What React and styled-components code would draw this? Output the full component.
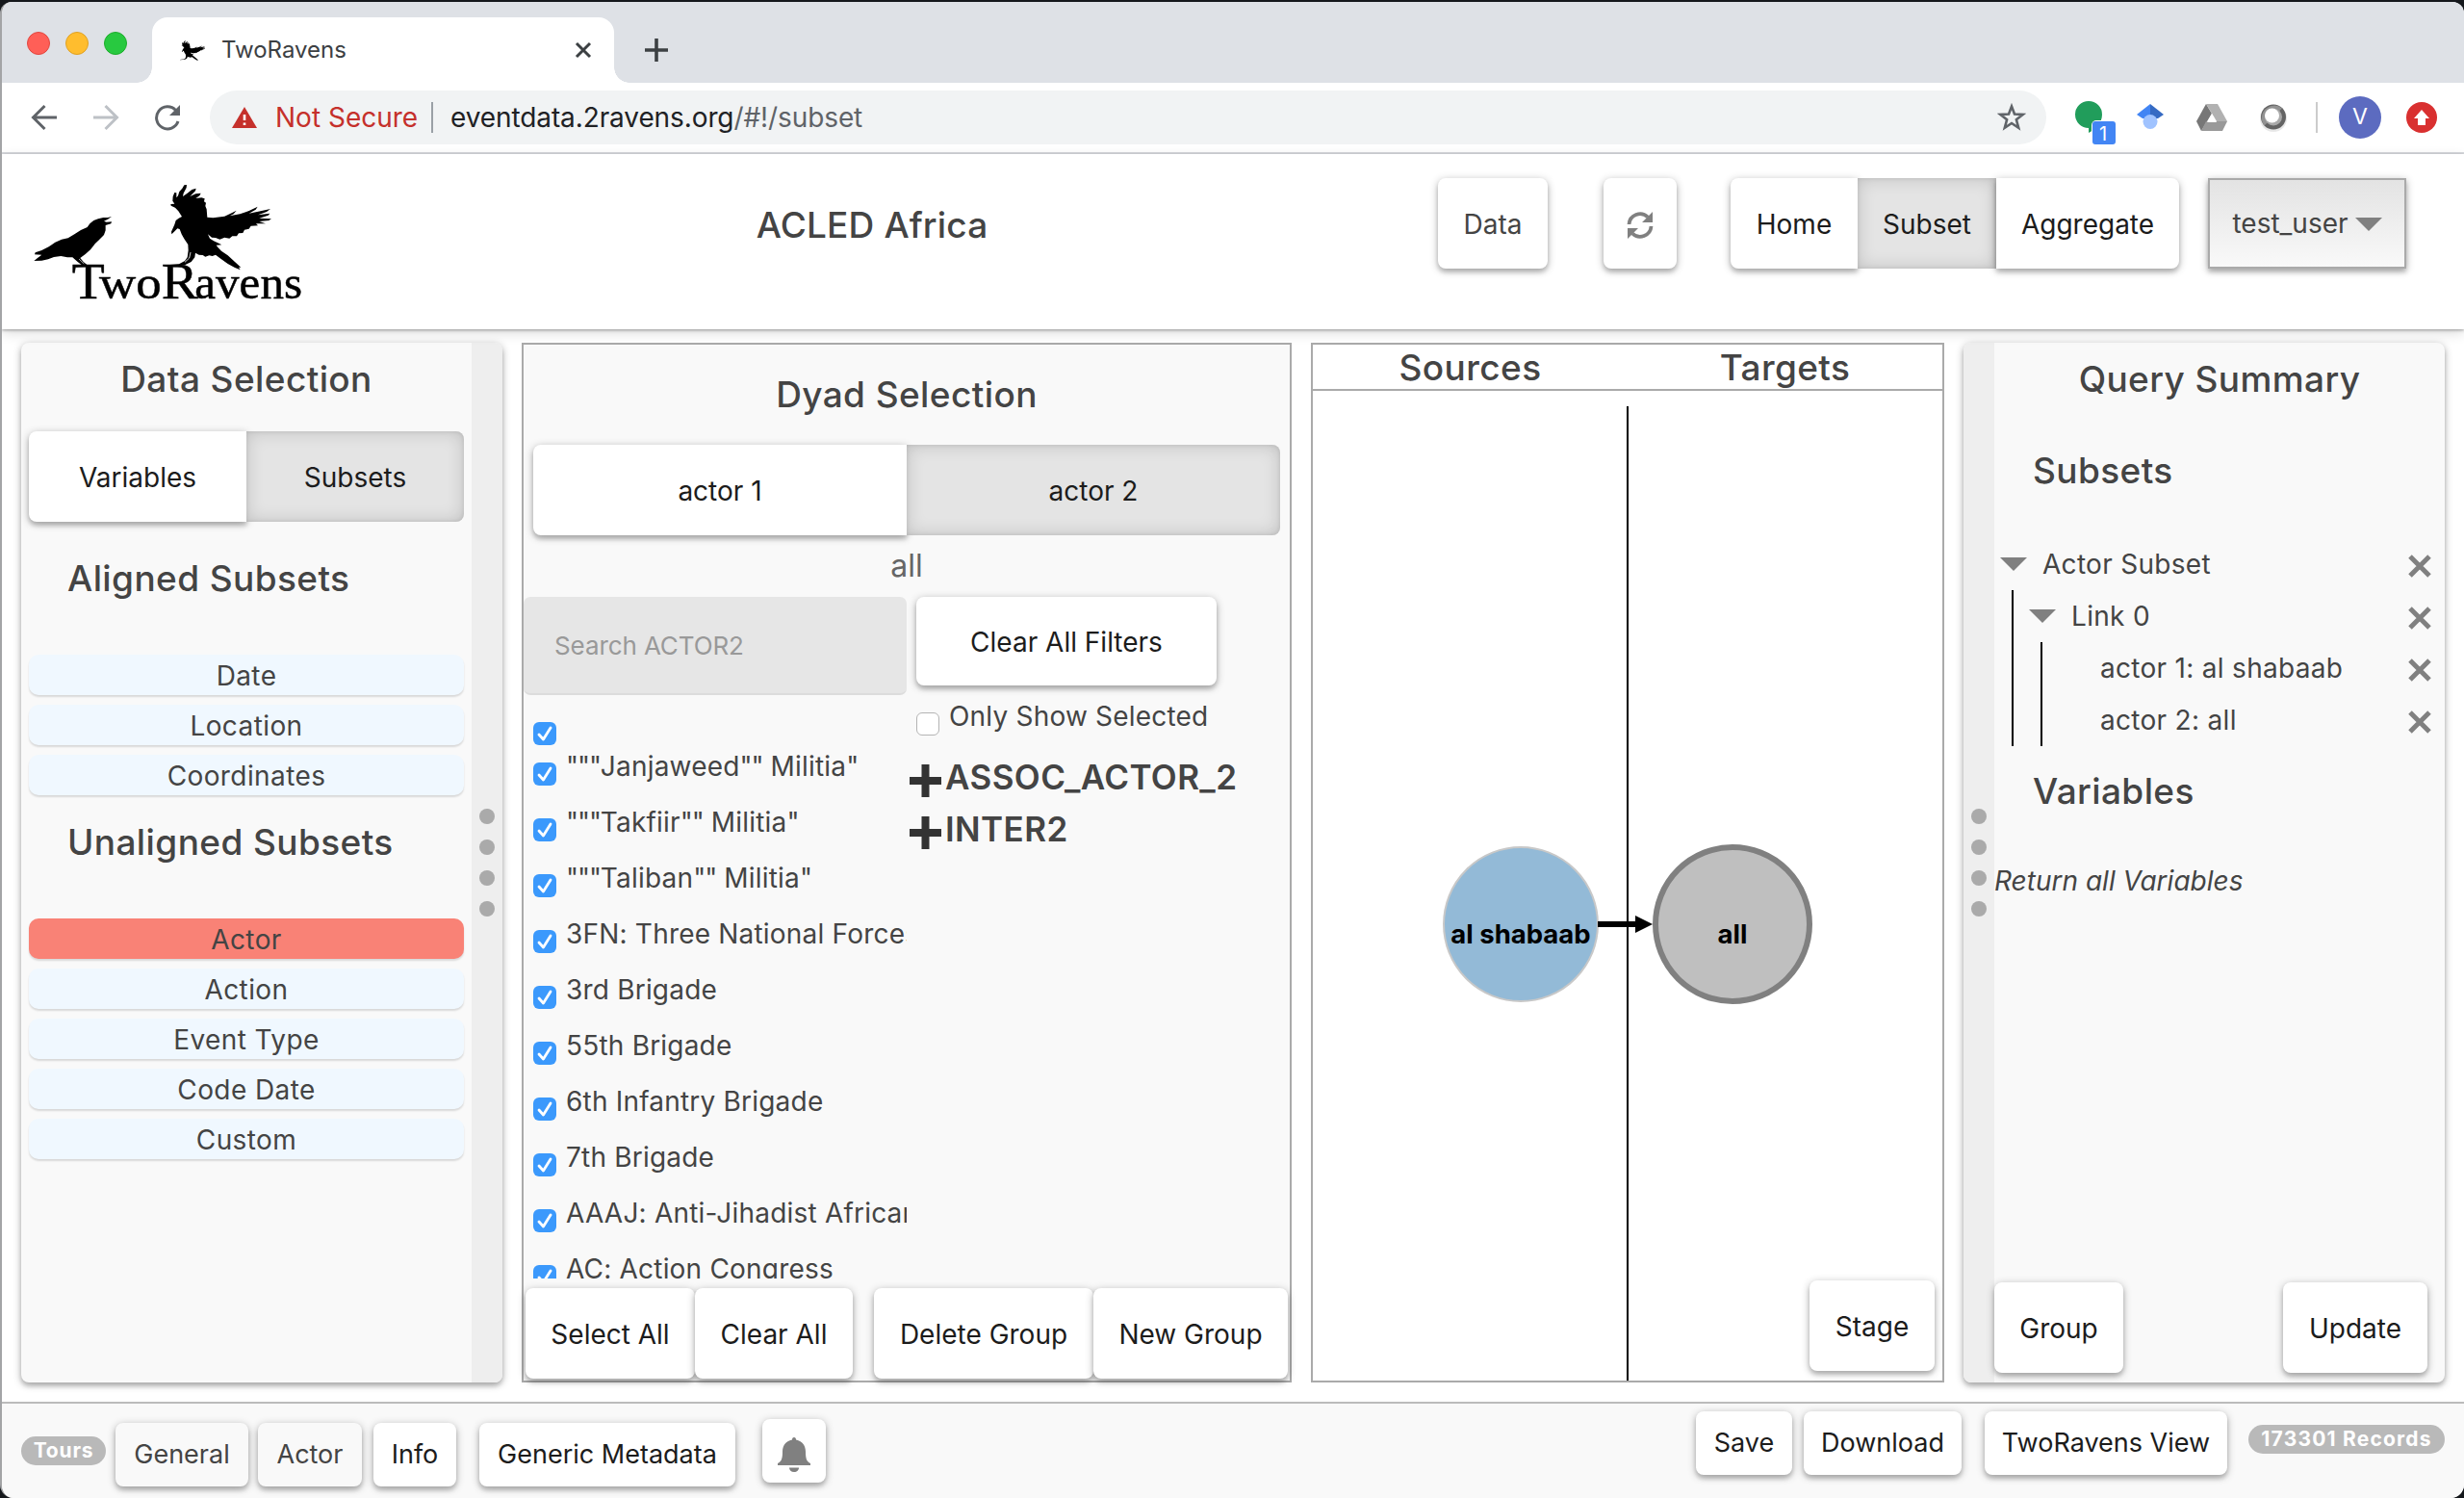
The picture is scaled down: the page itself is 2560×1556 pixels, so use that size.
import React from "react";
import styled, { createGlobalStyle, css } from "styled-components";

const Global = createGlobalStyle`
  * { box-sizing: border-box; }
  body { margin: 0; background: #15181c; overflow: hidden; }
  svg { display: block; flex: none; }
  h1, h2, h3, p { margin: 0; font-weight: 500; }
  button, input { font: inherit; letter-spacing: inherit; border: 0; padding: 0; margin: 0; }
`;

const raised = css`
  box-shadow: 0 4px 4px rgba(0, 0, 0, 0.14), 0 2px 8px rgba(0, 0, 0, 0.3);
`;

const Window = styled.div`
  width: 2560px;
  height: 1554px;
  margin-top: 2px;
  display: flex;
  flex-direction: column;
  border-left: 2px solid #a3a4a6;
  border-radius: 12px 12px 14px 14px;
  overflow: hidden;
  background: #fff;
  color: #444;
  font: 400 28px/1.21 Inter, "Liberation Sans", sans-serif;
`;

/* ---------- browser chrome ---------- */
const TabStrip = styled.div`
  height: 84px;
  flex: none;
  display: flex;
  align-items: center;
  padding-left: 26px;
  background: #dee1e6;
`;
const Lights = styled.div`
  display: flex;
  gap: 16px;
  margin-top: 2px;
`;
const Light = styled.span`
  width: 24px;
  height: 24px;
  border-radius: 50%;
  background: ${(p) => p.$color};
  border: 1px solid ${(p) => p.$edge};
`;
const Tab = styled.div`
  position: relative;
  align-self: flex-end;
  width: 480px;
  height: 68px;
  margin-left: 26px;
  padding: 0 23px 0 29px;
  display: flex;
  align-items: center;
  gap: 16px;
  background: #fff;
  border-radius: 16px 16px 0 0;
  color: #3c4043;
  font-size: 24px;
  &::before, &::after {
    content: "";
    position: absolute;
    bottom: 0;
    width: 16px;
    height: 16px;
  }
  &::before { left: -16px; background: radial-gradient(circle at 0 0, transparent 15.5px, #fff 16px); }
  &::after { right: -16px; background: radial-gradient(circle at 100% 0, transparent 15.5px, #fff 16px); }
`;
const TabTitle = styled.span`flex: 1;`;
const NewTab = styled.div`margin: 16px 0 0 32px;`;

const Toolbar = styled.div`
  height: 74px;
  flex: none;
  display: flex;
  align-items: center;
  padding-left: 30px;
  background: #fff;
  border-bottom: 2px solid #dadce0;
`;
const NavButtons = styled.div`
  display: flex;
  gap: 36px;
  margin-right: 30px;
`;
const Address = styled.div`
  width: 1908px;
  height: 56px;
  border-radius: 28px;
  background: #f1f3f4;
  padding: 0 21px 0 23px;
  display: flex;
  align-items: center;
`;
const Warning = styled.span`
  width: 163px;
  padding: 1px 0 0 19px;
  color: #c5302b;
  white-space: nowrap;
`;
const Divider = styled.span`
  width: 2px;
  height: 32px;
  margin: ${(p) => p.$m || 0};
  background: ${(p) => p.$color};
`;
const Url = styled.span`
  flex: 1;
  padding-top: 1px;
  color: #5f6368;
  letter-spacing: -0.1px;
  b { font-weight: 400; color: #202124; }
`;
const Extensions = styled.div`
  display: flex;
  gap: 16px;
  margin-left: 20px;
  svg { overflow: visible; }
`;
const Avatar = styled.div`
  width: 44px;
  height: 44px;
  margin-right: 26px;
  border-radius: 50%;
  background: #5c6bc0;
  color: #fff;
  font-size: 23px;
  display: flex;
  align-items: center;
  justify-content: center;
`;

/* ---------- shared parts ---------- */
const Button = styled.button`
  width: ${(p) => p.$w}px;
  height: ${(p) => p.$h || 94}px;
  flex: none;
  display: flex;
  align-items: center;
  justify-content: center;
  padding-top: 3px;
  border-radius: 8px;
  background: ${(p) => (p.$muted ? "#f9f9f9" : "#fff")};
  color: ${(p) => (p.$muted || p.$soft ? "#444" : "#1c1c1c")};
  white-space: nowrap;
  ${raised}
`;
const Group = styled.div`
  display: flex;
  margin: ${(p) => p.$m || 0};
  ${Button} { border-radius: 0; }
  ${Button}:first-child { border-radius: 8px 0 0 8px; }
  ${Button}:last-child { border-radius: 0 8px 8px 0; }
`;
const Pressed = styled(Button)`
  background: #e4e4e4;
  box-shadow: inset 0 0 18px rgba(0, 0, 0, 0.17), inset 0 0 4px rgba(0, 0, 0, 0.1);
`;
const Title = styled.h2`
  font-size: 37px;
  line-height: ${(p) => p.$lh}px;
  text-align: center;
  letter-spacing: 0.4px;
`;
const Heading = styled.h3`
  font-size: 37px;
  line-height: ${(p) => p.$lh}px;
  margin-bottom: ${(p) => p.$mb || 0}px;
  padding-left: 40px;
  letter-spacing: 0.4px;
`;
const Badge = styled.span`
  width: ${(p) => p.$w}px;
  height: 30px;
  border-radius: 15px;
  background: #b9b9b9;
  color: #fff;
  font-size: 21px;
  font-weight: 700;
  letter-spacing: ${(p) => p.$ls}px;
  line-height: 29px;
  text-align: center;
  white-space: nowrap;
`;

/* ---------- page header ---------- */
const Header = styled.header`
  position: relative;
  z-index: 1;
  height: 182px;
  flex: none;
  display: flex;
  align-items: flex-start;
  padding: 25px 0 0 18px;
  background: #fff;
  box-shadow: 0 1px 3px rgba(0, 0, 0, 0.35), 0 4px 12px rgba(0, 0, 0, 0.14);
  svg.logo { margin-top: -5px; }
`;
const DatasetName = styled.h1`
  width: 1152px;
  margin-right: 12px;
  line-height: 97px;
  font-size: 37px;
  letter-spacing: 0.15px;
  text-align: center;
`;
const UserMenu = styled.button`
  width: 206px;
  height: 94px;
  display: flex;
  align-items: center;
  justify-content: center;
  gap: 7px;
  padding-top: 2px;
  color: #444;
  border: 2px solid #aaa;
  background: linear-gradient(#e3e3e3, #f9f9f9);
  ${raised}
`;
const Spacer = styled.span`width: ${(p) => p.$w}px; flex: none;`;

/* ---------- workspace ---------- */
const Workspace = styled.main`
  flex: 1;
  min-height: 0;
  display: flex;
  gap: 20px;
  padding: 14px 20px 20px;
`;
const SidePanel = styled.aside`
  width: 500px;
  flex: none;
  display: flex;
  flex-direction: ${(p) => (p.$flip ? "row-reverse" : "row")};
  border-radius: 8px;
  overflow: hidden;
  background: #f9f9f9;
  ${raised}
`;
const PanelBody = styled.div`
  width: 468px;
  padding: 0 ${(p) => p.$px}px;
  display: flex;
  flex-direction: column;
`;
const Handle = styled.div`
  width: 32px;
  display: flex;
  flex-direction: column;
  align-items: center;
  justify-content: center;
  gap: 16px;
  background: #eee;
  i { width: 16px; height: 16px; border-radius: 50%; background: #aaa; }
`;
const Pills = styled.div`
  display: flex;
  flex-direction: column;
  gap: 10px;
`;
const Pill = styled.div`
  height: 42px;
  border-radius: 10px;
  line-height: 45px;
  text-align: center;
  letter-spacing: 0.4px;
  background: ${(p) => (p.$active ? "#f98276" : "#f0f8ff")};
  box-shadow: 0 2px 2px rgba(0, 0, 0, 0.13);
`;

const DyadPanel = styled.section`
  width: 800px;
  flex: none;
  display: flex;
  flex-direction: column;
  border: 2px solid #aaa;
  background: #f9f9f9;
`;
const GroupName = styled.p`
  line-height: 64px;
  font-size: 32px;
  font-weight: 400;
  color: #666;
  text-align: center;
`;
const Columns = styled.div`
  height: 708px;
  display: flex;
`;
const ActorColumn = styled.div`
  width: 398px;
  overflow: hidden;
`;
const Search = styled.input`
  display: block;
  width: 398px;
  height: 102px;
  padding: 1px 0 0 32px;
  border-radius: 7px;
  border-bottom: 2px solid #dcdcdc;
  background: #e6e6e6;
  font-size: 26px;
  &::placeholder { color: #999; opacity: 1; letter-spacing: -0.1px; }
`;
const ActorList = styled.div`
  padding: 2px 0 0 10px;
`;
const CheckRow = styled.label`
  display: flex;
  align-items: flex-start;
  gap: 10px;
  height: ${(p) => p.$h}px;
  line-height: ${(p) => p.$h + 2}px;
  white-space: nowrap;
  letter-spacing: ${(p) => p.$ls || 0.2}px;
`;
const Box = styled.span`
  width: 24px;
  height: 24px;
  flex: none;
  margin-top: ${(p) => p.$mt}px;
  border-radius: 6px;
  background: ${(p) => (p.$on ? "#3b99fc" : "#fff")};
  border: ${(p) => (p.$on ? "0" : "1.5px solid #b4b4b4")};
`;
const Quotes = styled.span`
  letter-spacing: -1.1px;
`;
const FilterColumn = styled.div`
  padding-left: 10px;
`;
const Filters = styled.div`margin-top: 10px;`;
const Filter = styled.div`
  display: flex;
  align-items: center;
  gap: 4px;
  height: 54px;
  margin-left: -7px;
  font-size: 35px;
  font-weight: 600;
  letter-spacing: 0.4px;
  svg { margin-top: 8px; }
`;
const ListActions = styled.div`
  display: flex;
  margin: 10px 2px 0;
`;

const GraphPanel = styled.section`
  width: 658px;
  flex: none;
  display: flex;
  flex-direction: column;
  border: 2px solid #aaa;
`;
const GraphHeader = styled.div`
  height: 48px;
  display: grid;
  grid-template-columns: 1fr 1fr;
  border-bottom: 2px solid #aaa;
`;
const Graph = styled.div`
  position: relative;
  flex: 1;
  ${Button} { position: absolute; right: 8px; bottom: 10px; }
`;

const Node = styled.div`
  height: 54px;
  display: flex;
  align-items: center;
  padding: 0 14px 0 ${(p) => p.$pl}px;
  letter-spacing: 0.3px;
  white-space: nowrap;
  span { flex: 1; padding: 2px 0 0 ${(p) => (p.$leaf ? 0 : 16)}px; }
`;
const Children = styled.div`
  margin-left: ${(p) => p.$ml}px;
  border-left: 2px solid #000;
`;
const Note = styled.p`
  line-height: 93px;
  font-weight: 400;
  font-style: italic;
`;
const PanelActions = styled.div`
  display: flex;
  justify-content: space-between;
  margin: auto 18px 10px 0;
`;

const Footer = styled.footer`
  height: 100px;
  flex: none;
  display: flex;
  justify-content: space-between;
  padding: 0 20px;
  border-top: 2px solid #bbb;
  background: #f9f9f9;
`;
const FooterSide = styled.div`
  display: flex;
  align-items: flex-start;
  padding-top: ${(p) => p.$pt}px;
  ${Badge} { margin-top: 14px; }
`;
const FooterButton = styled(Button)`
  padding-top: ${(p) => p.$pt || 0}px;
  font-size: 27px;
  letter-spacing: ${(p) => p.$ls || 0}px;
`;
const BellButton = styled(Button)`margin-top: -4px; padding-top: 8px;`;

/* ---------- drawings ---------- */
const FLYING =
  "M475 190 L474 182 L484 160 L488 147 L497 140 L507 135 L496 118 L486 107 L473 101 L472 96 L484 95 L478 86 L479 72 L484 60 L490 61 L490 76 L495 70 L499 57 L508 47 L514 37 L522 36 L521 45 L512 62 L510 72 L524 62 L538 51 L551 47 L549 55 L532 72 L550 64 L566 62 L562 70 L550 78 L568 76 L578 79 L576 88 L582 92 L580 102 L584 112 L586 137 L604 139 L640 134 L662 124 L677 116 L668 127 L656 133 L688 127 L716 117 L743 104 L737 113 L716 125 L752 118 L783 111 L771 120 L744 130 L781 125 L776 131 L748 140 L786 142 L778 147 L748 150 L768 157 L738 157 L744 163 L722 164 L716 173 L702 176 L697 186 L684 187 L678 196 L664 196 L655 203 L640 200 L625 206 L612 201 L600 200 L588 190 L594 203 L606 211 L619 217 L631 223 L614 224 L620 232 L630 242 L650 256 L672 276 L691 293 L684 293 L689 301 L672 294 L650 282 L628 266 L612 254 L602 258 L592 256 L580 260 L572 255 L560 254 L549 248 L547 262 L536 276 L516 286 L490 290 L446 291 L470 285 L498 283 L516 273 L524 262 L527 240 L526 222 L514 204 L506 190 L500 174 L493 172 L485 180 Z";
const PERCHED =
  "M288 135 L276 138 L262 138 L246 142 L232 147 L220 157 L212 168 L192 177 L172 190 L152 202 L132 206 L112 215 L92 229 L70 240 L50 247 L48 253 L70 254 L56 265 L46 273 L70 272 L90 268 L108 261 L130 258 L150 262 L166 262 L182 276 L194 285 L212 286 L200 276 L190 264 L206 252 L222 238 L236 220 L250 206 L264 192 L269 178 L269 162 L286 157 L288 151 L272 152 L264 149 L276 143 Z";

const Logo = () => (
  <svg className="logo" width="310" height="150" viewBox="0 0 930 450">
    <path d={PERCHED} />
    <path d={FLYING} />
    <path d="M534 246 L530 264 L516 277" stroke="#fff" strokeWidth="2.500" fill="none" />
    <path d="M186 267 L202 282" stroke="#fff" strokeWidth="2" fill="none" />
    <g fontFamily="'Liberation Serif', serif" stroke="#000" strokeWidth="1.500">
      <text x="164" y="391" fontSize="159" textLength="102" lengthAdjust="spacingAndGlyphs">T</text>
      <text x="249" y="391" fontSize="147" textLength="194" lengthAdjust="spacingAndGlyphs">wo</text>
      <text x="443" y="391" fontSize="159" textLength="114" lengthAdjust="spacingAndGlyphs">R</text>
      <text x="547" y="391" fontSize="147" textLength="335" lengthAdjust="spacingAndGlyphs">avens</text>
    </g>
  </svg>
);

const Caret = () => (
  <svg width="28" height="14" viewBox="0 0 28 14"><path d="M0 0H28L14 14Z" fill="#808080" /></svg>
);
const CrossIcon = styled.svg`margin-top: 4px;`;
const Cross = () => (
  <CrossIcon width="24" height="24" viewBox="0 0 24 24">
    <path d="M2 2L22 22M22 2L2 22" stroke="#808080" strokeWidth="5" />
  </CrossIcon>
);
const Tick = () => (
  <svg width="24" height="24" viewBox="0 0 24 24">
    <path d="M6 13L10.500 18L18 6" fill="none" stroke="#fff" strokeWidth="2.800" strokeLinecap="round" strokeLinejoin="round" />
  </svg>
);
const Plus = () => (
  <svg width="33" height="34" viewBox="0 0 33 34">
    <path d="M12.500 0h8v13h12.500v8H20.500v13h-8V21H0v-8h12.500z" fill="#333" />
  </svg>
);
const Dots = () => (<Handle><i /><i /><i /><i /></Handle>);

const actors = [
  "", '"""Janjaweed"" Militia"', '"""Takfiir"" Militia"', '"""Taliban"" Militia"',
  "3FN: Three National Forces", "3rd Brigade", "55th Brigade", "6th Infantry Brigade",
  "7th Brigade", "AAAJ: Anti-Jihadist African", "AC: Action Congress",
];

const ActorName = ({ children }) => (
  <span>
    {children.split(/("+)/).map((part, i) =>
      part.startsWith('"') ? <Quotes key={i}>{part}</Quotes> : part
    )}
  </span>
);

export default function App() {
  return (
    <>
      <Global />
      <Window>
        <TabStrip>
          <Lights>
            <Light $color="#ff5f57" $edge="#e2463f" />
            <Light $color="#ffbd2e" $edge="#dfa123" />
            <Light $color="#28c940" $edge="#1dad2b" />
          </Lights>
          <Tab>
            <svg width="27" height="27" viewBox="450 30 345 275"><path d={FLYING} /></svg>
            <TabTitle>TwoRavens</TabTitle>
            <svg width="18" height="18" viewBox="0 0 18 18"><path d="M2 2L16 16M16 2L2 16" stroke="#3c4043" strokeWidth="3" /></svg>
          </Tab>
          <NewTab>
            <svg width="24" height="24" viewBox="0 0 24 24"><path d="M12 0V24M0 12H24" stroke="#3c4043" strokeWidth="3.600" /></svg>
          </NewTab>
        </TabStrip>
        <Toolbar>
          <NavButtons>
            <svg width="28" height="28" viewBox="0 0 28 28"><path d="M27 14H3M14.500 2L2.500 14L14.500 26" fill="none" stroke="#5f6368" strokeWidth="3" /></svg>
            <svg width="28" height="28" viewBox="0 0 28 28"><path d="M1 14H25M13.500 2L25.500 14L13.500 26" fill="none" stroke="#bdc1c6" strokeWidth="3" /></svg>
            <svg width="28" height="28" viewBox="0 0 28 28">
              <path d="M25 18A11.500 11.500 0 1 1 22.500 6.500" fill="none" stroke="#5f6368" strokeWidth="3" />
              <path d="M27 1V12H16Z" fill="#5f6368" />
            </svg>
          </NavButtons>
          <Address>
            <svg width="26" height="22" viewBox="0 0 26 22">
              <path d="M13 0L26 22H0Z" fill="#c5302b" />
              <path d="M13 8V14M13 16.500V19" stroke="#fff" strokeWidth="2.600" />
            </svg>
            <Warning>Not Secure</Warning>
            <Spacer $w={18} />
            <Divider $color="#9aa0a6" $m="0 18px 0 0" />
            <Url><b>eventdata.2ravens.org</b>/#!/subset</Url>
            <svg width="30" height="30" viewBox="0 0 30 30">
              <path d="M15 3.500L18 11.500L26.700 11.900L19.900 17.300L22.200 25.800L15 21L7.800 25.800L10.100 17.300L3.300 11.900L12 11.500Z" fill="none" stroke="#5f6368" strokeWidth="2.600" />
            </svg>
          </Address>
          <Extensions>
            <svg width="48" height="60" viewBox="0 0 48 60">
              <path d="M24 13A14 14 0 1 0 24 41V46C31 42 38 36 38 27A14 14 0 0 0 24 13Z" fill="#219d5b" />
              <rect x="27" y="33" width="26" height="26" rx="5" fill="#fff" />
              <rect x="28" y="34" width="24" height="24" rx="3" fill="#4285f4" />
              <text x="39" y="54" fontSize="20" textAnchor="middle" fill="#fff">1</text>
            </svg>
            <svg width="48" height="60" viewBox="0 0 48 60">
              <path d="M24 16L10 27L16 31H24Z" fill="#4285f4" />
              <path d="M24 16L38 27L32 31H24Z" fill="#356ac3" />
              <circle cx="24" cy="34.500" r="7.500" fill="#a0c3ff" />
            </svg>
            <svg width="48" height="60" viewBox="0 0 48 60">
              <path d="M18 16L8 34L13 44L24 26Z" fill="#777" />
              <path d="M18 16H30L40 34H29Z" fill="#b1b1b1" />
              <path d="M18 34H40L35 44H13Z" fill="#999" />
              <path d="M24 26L29 35H19Z" fill="#fff" />
            </svg>
            <svg width="48" height="60" viewBox="0 0 48 60">
              <circle cx="24" cy="31" r="14" fill="#e8e8e8" />
              <circle cx="24" cy="29.500" r="13" fill="#646464" />
              <path d="M14.500 38.500A13 13 0 0 1 33 20.500Z" fill="#929292" />
              <circle cx="24" cy="29.500" r="9" fill="#aaa" />
              <circle cx="22.500" cy="28" r="7.500" fill="#fff" />
            </svg>
          </Extensions>
          <Divider $color="#ccc" $m="0 22px 0 20px" />
          <Avatar>V</Avatar>
          <svg width="32" height="32" viewBox="0 0 32 32">
            <circle cx="16" cy="16" r="16" fill="#d93030" />
            <path d="M16 8L24 17H20V24H12V17H8Z" fill="#fff" />
          </svg>
        </Toolbar>

        <Header>
          <Logo />
          <DatasetName>ACLED Africa</DatasetName>
          <Button $w={114} $soft>Data</Button>
          <Spacer $w={58} />
          <Button $w={76}>
            <svg width="30" height="30" viewBox="0 0 30 30">
              <path d="M3.500 14A11.500 11.500 0 0 1 23 6.500M26.500 16A11.500 11.500 0 0 1 7 23.500" fill="none" stroke="#808080" strokeWidth="3.800" />
              <path d="M28 1V12H17ZM2 29V18H13Z" fill="#808080" />
            </svg>
          </Button>
          <Group $m="0 30px 0 56px">
            <Button $w={132}>Home</Button>
            <Pressed $w={144}>Subset</Pressed>
            <Button $w={190}>Aggregate</Button>
          </Group>
          <UserMenu>test_user<Caret /></UserMenu>
        </Header>

        <Workspace>
          <SidePanel>
            <PanelBody $px={8}>
              <Title $lh={76} style={{ height: 92 }}>Data Selection</Title>
              <Group>
                <Button $w={226}>Variables</Button>
                <Pressed $w={226}>Subsets</Pressed>
              </Group>
              <Heading $lh={117} $mb={21}>Aligned Subsets</Heading>
              <Pills>
                {["Date", "Location", "Coordinates"].map((t) => <Pill key={t}>{t}</Pill>)}
              </Pills>
              <Heading $lh={97} $mb={31}>Unaligned Subsets</Heading>
              <Pills>
                {["Actor", "Action", "Event Type", "Code Date", "Custom"].map((t) => (
                  <Pill key={t} $active={t === "Actor"}>{t}</Pill>
                ))}
              </Pills>
            </PanelBody>
            <Dots />
          </SidePanel>

          <DyadPanel>
            <Title $lh={104}>Dyad Selection</Title>
            <Group $m="0 10px">
              <Button $w={388}>actor 1</Button>
              <Pressed $w={388}>actor 2</Pressed>
            </Group>
            <GroupName>all</GroupName>
            <Columns>
              <ActorColumn>
                <Search placeholder="Search ACTOR2" />
                <ActorList>
                  {actors.map((name, i) => (
                    <CheckRow key={i} $h={i === 0 ? 42 : 58}>
                      <Box $on $mt={26}><Tick /></Box>
                      <ActorName>{name}</ActorName>
                    </CheckRow>
                  ))}
                </ActorList>
              </ActorColumn>
              <FilterColumn>
                <Button $w={312} $h={92}>Clear All Filters</Button>
                <Spacer as="div" style={{ height: 4 }} />
                <CheckRow $h={54} $ls={0.2}>
                  <Box $mt={24} />
                  Only Show Selected
                </CheckRow>
                <Filters>
                  <Filter><Plus />ASSOC_ACTOR_2</Filter>
                  <Filter><Plus />INTER2</Filter>
                </Filters>
              </FilterColumn>
            </Columns>
            <ListActions>
              <Button $w={176}>Select All</Button>
              <Button $w={164}>Clear All</Button>
              <Spacer $w={22} />
              <Button $w={228}>Delete Group</Button>
              <Button $w={202}>New Group</Button>
            </ListActions>
          </DyadPanel>

          <GraphPanel>
            <GraphHeader>
              <Title $lh={48}>Sources</Title>
              <Title $lh={48}>Targets</Title>
            </GraphHeader>
            <Graph>
              <svg width="654" height="1028" viewBox="1364 406 654 1028">
                <path d="M1691 422V1434" stroke="#000" strokeWidth="2" />
                <circle cx="1580" cy="960" r="80" fill="#93bad7" stroke="#c8c8c8" strokeWidth="2" />
                <circle cx="1800" cy="960" r="80" fill="#bfbfbf" stroke="#808080" strokeWidth="6" />
                <path d="M1660 960H1702" stroke="#000" strokeWidth="6" />
                <path d="M1699 951L1717 960L1699 969Z" />
                <g fontSize="27.500" fontWeight="700" textAnchor="middle" fill="#000">
                  <text x="1580" y="979.500">al shabaab</text>
                  <text x="1800" y="979.500">all</text>
                </g>
              </svg>
              <Button $w={130}>Stage</Button>
            </Graph>
          </GraphPanel>

          <SidePanel $flip>
            <PanelBody $px={0}>
              <Title $lh={76}>Query Summary</Title>
              <Heading $lh={113} $mb={14}>Subsets</Heading>
              <Node $pl={6}><Caret /><span>Actor Subset</span><Cross /></Node>
              <Children $ml={18}>
                <Node $pl={16}><Caret /><span>Link 0</span><Cross /></Node>
                <Children $ml={28}>
                  <Node $pl={60} $leaf><span>actor 1: al shabaab</span><Cross /></Node>
                  <Node $pl={60} $leaf><span>actor 2: all</span><Cross /></Node>
                </Children>
              </Children>
              <Heading $lh={94}>Variables</Heading>
              <Note>Return all Variables</Note>
              <PanelActions>
                <Button $w={134}>Group</Button>
                <Button $w={150}>Update</Button>
              </PanelActions>
            </PanelBody>
            <Dots />
          </SidePanel>
        </Workspace>

        <Footer>
          <FooterSide $pt={20}>
            <Badge $w={88} $ls={0.8}>Tours</Badge>
            <Spacer $w={10} />
            <FooterButton $w={138} $h={66} $muted>General</FooterButton>
            <Spacer $w={10} />
            <FooterButton $w={108} $h={66} $muted>Actor</FooterButton>
            <Spacer $w={12} />
            <FooterButton $w={86} $h={66}>Info</FooterButton>
            <Spacer $w={24} />
            <FooterButton $w={266} $h={66}>Generic Metadata</FooterButton>
            <Spacer $w={28} />
            <BellButton $w={66} $h={66}>
              <svg width="34" height="36" viewBox="0 0 34 36">
                <path d="M17 0C18.500 0 19 1 19 2.500C26 4 29 9 29 15C29 22 30 25 34 27V29H0V27C4 25 5 22 5 15C5 9 8 4 15 2.500C15 1 15.500 0 17 0Z" fill="#808080" />
                <path d="M12 31.500H22C22 34 20 36 17 36S12 34 12 31.500Z" fill="#808080" />
              </svg>
            </BellButton>
          </FooterSide>
          <FooterSide $pt={8}>
            <FooterButton $w={100} $h={66}>Save</FooterButton>
            <Spacer $w={12} />
            <FooterButton $w={164} $h={66}>Download</FooterButton>
            <Spacer $w={24} />
            <FooterButton $w={252} $h={66}>TwoRavens View</FooterButton>
            <Spacer $w={22} />
            <Badge $w={204} $ls={1.2}>173301 Records</Badge>
          </FooterSide>
        </Footer>
      </Window>
    </>
  );
}
